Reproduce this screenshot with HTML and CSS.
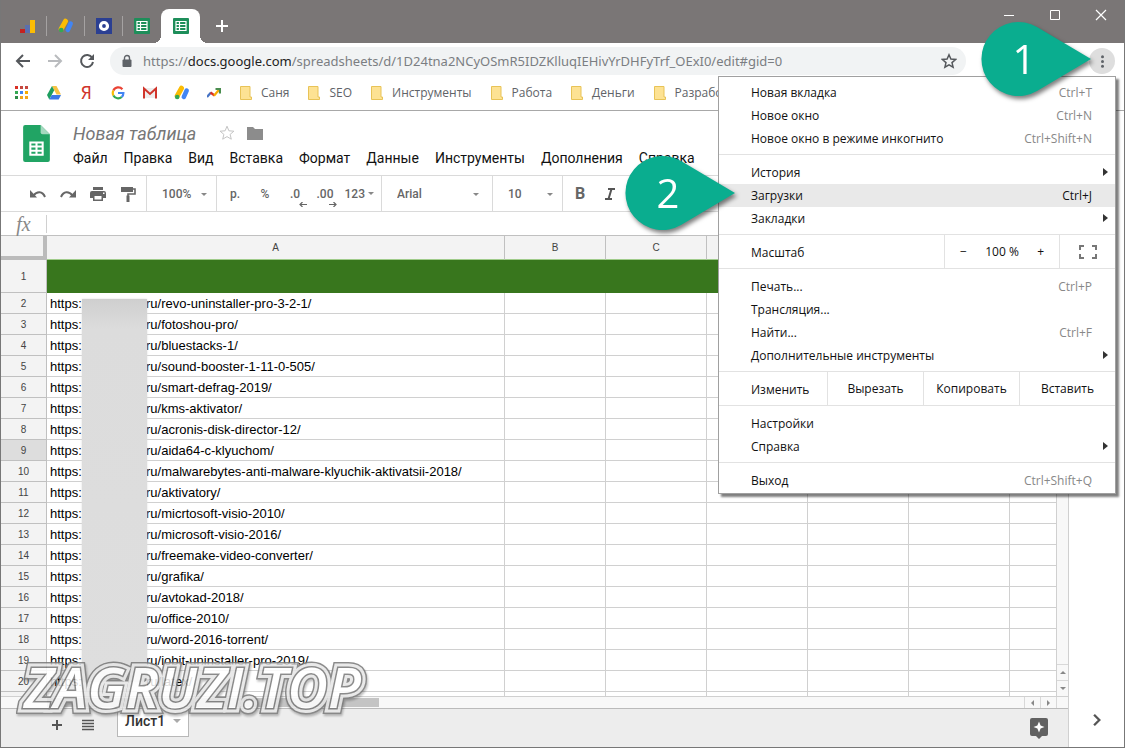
FILE: index.html
```html
<!DOCTYPE html>
<html lang="ru">
<head>
<meta charset="utf-8">
<title>Новая таблица</title>
<link rel="stylesheet" href="styles.css">
</head>
<body>
<svg class="defs" aria-hidden="true">
  <symbol id="sheet-fav" viewBox="0 0 16 16"><rect width="16" height="16" rx="1" fill="#1e8e5a"/><path d="M3 3.500h10v9H3zM3 6.500h10M3 9.500h10M6.500 3.500v9" fill="none" stroke="#fff" stroke-width="1.200"/></symbol>
  <symbol id="folder" viewBox="0 0 12 14"><path d="M.5.5h9.500v10.500h1.500v2.500H.5z" fill="#fde293" stroke="#e8c357"/></symbol>
  <symbol id="ads" viewBox="0 0 16 16"><path d="M7.500 3.200 3.200 11" stroke="#fbbc04" stroke-width="5" stroke-linecap="round"/><path d="M12.700 5.500 9.800 12" stroke="#4285f4" stroke-width="4.500" stroke-linecap="round"/><circle cx="3.200" cy="12" r="2.300" fill="#34a853"/></symbol>
</svg>
<div class="window">
  <header class="tabs">
    <div class="tab-list">
      <button class="tab" aria-label="Analytics"><svg viewBox="0 0 16 16"><path d="M0 11h5v4H0z" fill="#c5221f"/><path d="M5 7h5v8H5z" fill="#5b6fae"/><path d="M10 2h5v13h-5z" fill="#fbbc04"/></svg></button>
      <button class="tab" aria-label="AdSense"><svg><use href="#ads"/></svg></button>
      <button class="tab" aria-label="Сервис"><svg viewBox="0 0 16 16"><rect width="16" height="16" fill="#2b3f92"/><circle cx="8" cy="8" r="3.500" fill="none" stroke="#fff" stroke-width="3.200"/></svg></button>
      <button class="tab" aria-label="Таблица"><svg><use href="#sheet-fav"/></svg></button>
      <button class="tab active" aria-label="Новая таблица"><svg><use href="#sheet-fav"/></svg></button>
      <button class="new-tab" aria-label="Новая вкладка"><svg viewBox="0 0 14 14"><path d="M7 1v12M1 7h12" stroke="#fff" stroke-width="2"/></svg></button>
    </div>
    <div class="window-buttons">
      <button aria-label="Свернуть"><svg viewBox="0 0 12 12"><path d="M1 6.500h10" stroke="#fff"/></svg></button>
      <button aria-label="Развернуть"><svg viewBox="0 0 12 12"><path d="M1.500 1.500h9v9h-9z" fill="none" stroke="#fff"/></svg></button>
      <button aria-label="Закрыть"><svg viewBox="0 0 12 12"><path d="m1 1 10 10M11 1 1 11" stroke="#fff" stroke-width="1.200"/></svg></button>
    </div>
  </header>

  <div class="address-row">
    <button class="nav" aria-label="Назад"><svg viewBox="0 0 16 16"><path d="M15 8H2M8 2 2 8l6 6" fill="none" stroke="#55585c" stroke-width="2"/></svg></button>
    <button class="nav" aria-label="Вперёд"><svg viewBox="0 0 16 16"><path d="M1 8h13M8 2l6 6-6 6" fill="none" stroke="#b9bbbe" stroke-width="2"/></svg></button>
    <button class="nav" aria-label="Обновить"><svg viewBox="0 0 16 16"><path d="M13.200 4.800A6 6 0 1 0 14 9" fill="none" stroke="#55585c" stroke-width="2"/><path d="M15 1v6H9z" fill="#55585c"/></svg></button>
    <div class="omnibox">
      <svg class="lock" viewBox="0 0 10 14"><path d="M2.500 6V4a2.500 2.500 0 0 1 5 0v2" fill="none" stroke="#5f6368" stroke-width="1.400"/><rect x="0.500" y="5.500" width="9" height="7.500" rx="1" fill="#5f6368"/></svg>
      <div class="url" role="textbox" contenteditable="true" spellcheck="false" aria-label="Адрес">https://<b>docs.google.com</b>/spreadsheets/d/1D24tna2NCyOSmR5IDZKlluqIEHivYrDHFyTrf_OExI0/edit#gid=0</div>
      <button class="star" aria-label="В закладки"><svg viewBox="0 0 16 16"><path d="m8 1.800 1.900 4.300 4.700.4-3.600 3.100 1.100 4.600L8 11.800l-4.100 2.400L5 9.600 1.400 6.500l4.700-.4z" fill="none" stroke="#55585c" stroke-width="1.500"/></svg></button>
    </div>
    <button class="more" aria-label="Меню" aria-expanded="true"><svg viewBox="0 0 16 16"><circle cx="8" cy="3" r="1.600"/><circle cx="8" cy="8" r="1.600"/><circle cx="8" cy="13" r="1.600"/></svg></button>
  </div>

  <nav class="bookmarks" aria-label="Закладки">
    <a href="#" aria-label="Сервисы"><svg viewBox="0 0 14 14"><path d="M0 0h3v3H0z" fill="#d93025"/><path d="M5 0h3v3H5zM10 0h3v3h-3z" fill="#c5483f"/><path d="M0 5h3v3H0z" fill="#34a853"/><path d="M5 5h3v3H5z" fill="#4285f4"/><path d="M10 5h3v3h-3z" fill="#f9ab00"/><path d="M0 10h3v3H0z" fill="#2d8a47"/><path d="M5 10h3v3H5zM10 10h3v3h-3z" fill="#f2a51d"/></svg></a>
    <a href="#" aria-label="Диск"><svg viewBox="0 0 14 14"><path d="M5 0h4.500L14 8.500H9.500z" fill="#f6c343"/><path d="M5 0 0 9l2.300 4.500L7.200 4.200z" fill="#1e9e5f"/><path d="M4.700 8.900H14l-2.300 4.600H2.300z" fill="#3b78e7"/></svg></a>
    <a href="#" class="yandex" aria-label="Яндекс">Я</a>
    <a href="#" aria-label="Google"><svg viewBox="0 0 14 14" fill="none" stroke-width="2.200"><path d="M11.400 3.200A5.400 5.400 0 0 0 2.400 4.500" stroke="#ea4335"/><path d="M2.400 4.500a5.400 5.400 0 0 0 0 5" stroke="#fbbc04"/><path d="M2.400 9.500a5.400 5.400 0 0 0 8.300 1.500" stroke="#34a853"/><path d="M10.700 11a5.400 5.400 0 0 0 1.700-4H7" stroke="#4285f4"/></svg></a>
    <a href="#" aria-label="Gmail"><svg viewBox="0 0 14 14"><path d="M1 2h12v10H1z" fill="#eee"/><path d="M1 12.500V2.500L7 8l6-5.500v10" fill="none" stroke="#d0352b" stroke-width="2"/></svg></a>
    <a href="#" aria-label="AdSense"><svg class="wide"><use href="#ads"/></svg></a>
    <a href="#" aria-label="Статистика"><svg viewBox="0 0 14 14" fill="none" stroke-width="2.200"><path d="m0 11 4-4.500" stroke="#4472c4"/><path d="m3.500 6.500 4 3" stroke="#d93025"/><path d="m7 9.800 5-6" stroke="#f9ab00"/><path d="M8.500 3h4.500v4.500" stroke="#4a8d4f"/></svg></a>
    <a href="#"><svg class="folder"><use href="#folder"/></svg>Саня</a>
    <a href="#"><svg class="folder"><use href="#folder"/></svg>SEO</a>
    <a href="#"><svg class="folder"><use href="#folder"/></svg>Инструменты</a>
    <a href="#"><svg class="folder"><use href="#folder"/></svg>Работа</a>
    <a href="#"><svg class="folder"><use href="#folder"/></svg>Деньги</a>
    <a href="#"><svg class="folder"><use href="#folder"/></svg>Разработка</a>
  </nav>

  <div class="content">
    <main class="editor">
      <div class="doc-header">
        <svg class="logo" viewBox="0 0 26 36"><path d="M2 0h15l9 9v25a2 2 0 0 1-2 2H2a2 2 0 0 1-2-2V2a2 2 0 0 1 2-2z" fill="#21a464"/><path d="M17 0v7a2 2 0 0 0 2 2h7z" fill="#a4d9bf"/><path d="M7 17h12v12H7zM7 21h12M7 25h12M13 17v12" fill="none" stroke="#fff" stroke-width="2"/></svg>
        <div class="doc-meta">
          <div class="title-row">
            <input class="title" value="Новая таблица" aria-label="Название">
            <button aria-label="Пометить"><svg viewBox="0 0 16 16"><path d="m8 1.200 1.900 4.600 5 .4-3.800 3.200 1.200 4.800L8 11.600l-4.300 2.600 1.200-4.800L1.100 6.200l5-.4z" fill="none" stroke="#c4c4c4"/></svg></button>
            <button aria-label="Переместить"><svg viewBox="0 0 16 16"><path d="M0 2h6l2 2h8v11H0z" fill="#8c8c8c"/></svg></button>
          </div>
          <nav class="doc-menu" aria-label="Меню документа">
            <button>Файл</button><button>Правка</button><button>Вид</button><button>Вставка</button><button>Формат</button><button>Данные</button><button>Инструменты</button><button>Дополнения</button><button>Справка</button>
          </nav>
        </div>
      </div>

      <div class="toolbar">
        <div class="group icons">
          <button aria-label="Отменить"><svg viewBox="0 0 18 18"><path d="M4.500 10.500C8 6 13.500 6 16 12" fill="none" stroke="#666" stroke-width="2"/><path d="M1 5v7.500h7z" fill="#666"/></svg></button>
          <button aria-label="Повторить"><svg viewBox="0 0 18 18"><path d="M13.500 10.500C10 6 4.500 6 2 12" fill="none" stroke="#666" stroke-width="2"/><path d="M17 5v7.500h-7z" fill="#666"/></svg></button>
          <button aria-label="Печать"><svg viewBox="0 0 18 18" fill="#666"><path d="M4 2h10v3H4z"/><path fill-rule="evenodd" d="M3 6h12a2 2 0 0 1 2 2v5h-3v3H4v-3H1V8a2 2 0 0 1 2-2zm2.500 5v3.500h7V11zM14 7.500V9h1.500V7.500z"/></svg></button>
          <button aria-label="Формат"><svg viewBox="0 0 18 18"><path d="M2 2h12v5H2z" fill="#666"/><path d="M14 4h2v5H9v2" fill="none" stroke="#666" stroke-width="1.600"/><path d="M7.500 10.500h3V17h-3z" fill="#666"/></svg></button>
        </div>
        <div class="group zoom"><select aria-label="Масштаб"><option>100%</option></select></div>
        <div class="group formats">
          <button>р.</button><button>%</button>
          <button class="decimal">.0<svg viewBox="0 0 8 5"><path d="M8 2.500H1M3.500 0 1 2.500 3.500 5" fill="none" stroke="#666" stroke-width="1.200"/></svg></button>
          <button class="decimal">.00<svg viewBox="0 0 8 5"><path d="M0 2.500h7M4.500 0 7 2.500 4.500 5" fill="none" stroke="#666" stroke-width="1.200"/></svg></button>
          <button class="number-format">123<i class="caret"></i></button>
        </div>
        <div class="group font"><select aria-label="Шрифт"><option>Arial</option></select></div>
        <div class="group size"><select aria-label="Размер"><option>10</option></select></div>
        <div class="group style"><button class="bold" aria-label="Полужирный">B</button><button aria-label="Курсив"><svg viewBox="0 0 14 14"><path d="M5 2h7M2 12h7M8.500 2l-3 10" stroke="#555" stroke-width="2"/></svg></button></div>
      </div>

      <div class="formula">
        <label for="fx">fx</label>
        <input id="fx" type="text">
      </div>

      <div class="grid-area">
        <div class="grid">
          <table>
            <colgroup><col class="c-num"><col class="c-a"><col class="c"><col class="c"><col class="c"><col class="c"><col class="c"><col></colgroup>
            <thead><tr><th class="corner"><th>A<th>B<th>C<th>D<th>E<th>F<th>G</thead>
            <tbody>
            <tr class="green"><th>1<td><td><td><td><td><td><td>
            <tr><th>2<td><span class="scheme">https:</span>ru/revo-uninstaller-pro-3-2-1/<td><td><td><td><td><td>
            <tr><th>3<td><span class="scheme">https:</span>ru/fotoshou-pro/<td><td><td><td><td><td>
            <tr><th>4<td><span class="scheme">https:</span>ru/bluestacks-1/<td><td><td><td><td><td>
            <tr><th>5<td><span class="scheme">https:</span>ru/sound-booster-1-11-0-505/<td><td><td><td><td><td>
            <tr><th>6<td><span class="scheme">https:</span>ru/smart-defrag-2019/<td><td><td><td><td><td>
            <tr><th>7<td><span class="scheme">https:</span>ru/kms-aktivator/<td><td><td><td><td><td>
            <tr><th>8<td><span class="scheme">https:</span>ru/acronis-disk-director-12/<td><td><td><td><td><td>
            <tr class="current"><th>9<td><span class="scheme">https:</span>ru/aida64-c-klyuchom/<td><td><td><td><td><td>
            <tr><th>10<td><span class="scheme">https:</span>ru/malwarebytes-anti-malware-klyuchik-aktivatsii-2018/<td><td><td><td><td><td>
            <tr><th>11<td><span class="scheme">https:</span>ru/aktivatory/<td><td><td><td><td><td>
            <tr><th>12<td><span class="scheme">https:</span>ru/micrtosoft-visio-2010/<td><td><td><td><td><td>
            <tr><th>13<td><span class="scheme">https:</span>ru/microsoft-visio-2016/<td><td><td><td><td><td>
            <tr><th>14<td><span class="scheme">https:</span>ru/freemake-video-converter/<td><td><td><td><td><td>
            <tr><th>15<td><span class="scheme">https:</span>ru/grafika/<td><td><td><td><td><td>
            <tr><th>16<td><span class="scheme">https:</span>ru/avtokad-2018/<td><td><td><td><td><td>
            <tr><th>17<td><span class="scheme">https:</span>ru/office-2010/<td><td><td><td><td><td>
            <tr><th>18<td><span class="scheme">https:</span>ru/word-2016-torrent/<td><td><td><td><td><td>
            <tr><th>19<td><span class="scheme">https:</span>ru/iobit-uninstaller-pro-2019/<td><td><td><td><td><td>
            <tr><th>20<td><span class="scheme">https:</span>ru/latex/<td><td><td><td><td><td>
            <tr><th><td><td><td><td><td><td><td>
            </tbody>
          </table>
          <div class="smudge"></div>
        </div>
        <div class="v-scroll">
          <button aria-label="Вверх"><i class="arrow up"></i></button>
          <button aria-label="Вниз"><i class="arrow down"></i></button>
        </div>
      </div>
      <div class="h-scroll">
        <div class="track"><div class="thumb"></div></div>
        <button aria-label="Влево"><i class="arrow left"></i></button>
        <button aria-label="Вправо"><i class="arrow right"></i></button>
        <div class="scroll-corner"></div>
      </div>
      <footer class="sheet-bar">
        <button aria-label="Добавить лист"><svg viewBox="0 0 12 12"><path d="M6 1v10M1 6h10" stroke="#555" stroke-width="2"/></svg></button>
        <button aria-label="Все листы"><svg viewBox="0 0 12 12"><path d="M0 1.500h12M0 4.500h12M0 7.500h12M0 10.500h12" stroke="#555" stroke-width="1.600"/></svg></button>
        <button class="sheet-tab">Лист1<i class="caret"></i></button>
        <button class="explore" aria-label="Анализ данных"><svg viewBox="0 0 18 21"><path d="M2 0h14a2 2 0 0 1 2 2v14a2 2 0 0 1-2 2h-4l-3 3-3-3H2a2 2 0 0 1-2-2V2a2 2 0 0 1 2-2z" fill="#616161"/><path d="m9 3.500 1.600 3.900L14.500 9l-3.900 1.600L9 14.500l-1.600-3.900L3.500 9l3.900-1.600z" fill="#fff"/></svg></button>
      </footer>
    </main>
    <aside class="side">
      <button aria-label="Показать панель"><svg viewBox="0 0 12 12"><path d="m3.500 1.500 4.500 4.500-4.500 4.500" fill="none" stroke="#555" stroke-width="2"/></svg></button>
    </aside>
  </div>
</div>

<div class="chrome-menu" role="menu">
  <div class="section">
    <button role="menuitem">Новая вкладка<kbd>Ctrl+T</kbd></button>
    <button role="menuitem">Новое окно<kbd>Ctrl+N</kbd></button>
    <button role="menuitem">Новое окно в режиме инкогнито<kbd>Ctrl+Shift+N</kbd></button>
  </div>
  <div class="section">
    <button role="menuitem" class="sub">История</button>
    <button role="menuitem" class="hover">Загрузки<kbd>Ctrl+J</kbd></button>
    <button role="menuitem" class="sub">Закладки</button>
  </div>
  <div class="row zoom-row">
    <span class="row-label">Масштаб</span>
    <div class="zoom-controls"><button>−</button><span>100 %</span><button>+</button></div>
    <button class="full" aria-label="Во весь экран"><svg viewBox="0 0 18 14"><path d="M1 5V1h4M13 1h4v4M17 9v4h-4M5 13H1V9" fill="none" stroke="#777" stroke-width="2"/></svg></button>
  </div>
  <div class="section">
    <button role="menuitem">Печать...<kbd>Ctrl+P</kbd></button>
    <button role="menuitem">Трансляция...</button>
    <button role="menuitem">Найти...<kbd>Ctrl+F</kbd></button>
    <button role="menuitem" class="sub">Дополнительные инструменты</button>
  </div>
  <div class="row edit-row">
    <span class="row-label">Изменить</span>
    <button>Вырезать</button><button>Копировать</button><button>Вставить</button>
  </div>
  <div class="section">
    <button role="menuitem">Настройки</button>
    <button role="menuitem" class="sub">Справка</button>
  </div>
  <div class="section last">
    <button role="menuitem">Выход<kbd>Ctrl+Shift+Q</kbd></button>
  </div>
</div>

<div class="pin pin-one"><svg viewBox="0 0 112 76"><path d="M111 38 57 70A37 37 0 1 1 57 6z"/></svg><span>1</span></div>
<div class="pin pin-two"><svg viewBox="0 0 112 76"><path d="M111 38 57 70A37 37 0 1 1 57 6z"/></svg><span>2</span></div>
<div class="watermark" data-text="ZAGRUZI.TOP">ZAGRUZI.TOP</div>
</body>
</html>
```
FILE: styles.css
```css
* { box-sizing: border-box; }
html, body { height: 100%; }
body { margin: 0; position: relative; overflow: hidden; font-family: "Open Sans", "Noto Sans", sans-serif; font-size: 12px; color: #222; background: #fff; }
button, input, select { font: inherit; color: inherit; border: 0; background: none; padding: 0; margin: 0; outline: 0; }
select { appearance: none; }
svg { display: block; }
.defs { display: none; }

.window { height: 100%; display: flex; flex-direction: column; border: solid #777; border-width: 0 1px 1px; }

.tabs { flex: none; height: 43px; background: #7a7676; display: flex; justify-content: space-between; }
.tab-list { display: flex; align-items: flex-end; padding-left: 8px; }
.tab { width: 38px; height: 34px; display: grid; place-items: center; position: relative; }
.tab svg { width: 16px; height: 16px; }
.tab:nth-child(-n+3)::after { content: ""; position: absolute; right: 0; top: 7px; height: 20px; border-right: 1px solid #a5a2a2; }
.tab.active { width: 39px; background: #fff; border-radius: 8px 8px 0 0; }
.tab.active::before, .tab.active::after { content: ""; position: absolute; bottom: 0; width: 8px; height: 8px; }
.tab.active::before { right: 100%; background: radial-gradient(circle at 0 0, transparent 8px, #fff 8px); }
.tab.active::after { left: 100%; background: radial-gradient(circle at 100% 0, transparent 8px, #fff 8px); }
.new-tab { width: 44px; height: 34px; display: grid; place-items: center; }
.new-tab svg { width: 14px; height: 14px; }
.window-buttons { display: flex; height: 30px; }
.window-buttons button { width: 46px; display: grid; place-items: center; }
.window-buttons svg { width: 12px; height: 12px; }

.address-row { flex: none; height: 36px; display: flex; align-items: center; padding: 0 9px 0 6px; background: #fff; }
.nav { width: 32px; height: 28px; display: grid; place-items: center; }
.nav svg { width: 16px; height: 16px; }
.omnibox { flex: 1; height: 28px; display: flex; align-items: center; margin: 0 123px 0 7px; padding: 0 9px 0 12px; border-radius: 14px; background: #f1f3f4; }
.lock { width: 10px; height: 14px; }
.url { flex: 1; margin-left: 11px; font: 13px/20px "Noto Sans", "Open Sans", sans-serif; color: #7b7e82; white-space: nowrap; outline: 0; }
.url b { font-weight: 400; color: #222; }
.star svg { width: 16px; height: 16px; }
.more { width: 26px; height: 26px; border-radius: 50%; background: #dedede; display: grid; place-items: center; }
.more svg { width: 15px; height: 15px; fill: #5f6368; }

.bookmarks { flex: none; height: 32px; display: flex; align-items: center; gap: 18px; padding: 0 14px 4px; border-bottom: 1px solid #a8a8a8; overflow: hidden; }
.bookmarks a { display: flex; align-items: center; gap: 9px; color: #606368; text-decoration: none; line-height: 18px; white-space: nowrap; }
.bookmarks svg { width: 14px; height: 14px; }
.bookmarks svg.wide { width: 16px; height: 16px; margin: 0 -1px; }
.bookmarks svg.folder { width: 12px; margin-left: 1px; }
.bookmarks .yandex { width: 14px; justify-content: center; color: #d0352b; font: 18px/18px "DejaVu Sans Condensed", sans-serif; }

.content { flex: 1; min-height: 0; display: flex; }
.editor { flex: 1; min-width: 0; display: flex; flex-direction: column; border-right: 1px solid #d0d0d0; }
.side { width: 55px; display: flex; align-items: flex-end; justify-content: center; padding-bottom: 20px; }
.side svg { width: 14px; height: 14px; }

.doc-header { flex: none; height: 65px; display: flex; padding: 14px 22px 0; gap: 23px; border-bottom: 1px solid #dadada; }
.logo { width: 27px; height: 37px; }
.doc-meta { display: flex; flex-direction: column; margin-top: -4px; font-family: Roboto, sans-serif; }
.title-row { display: flex; align-items: center; gap: 12px; height: 24px; }
.title { width: 134px; font-size: 18px; font-style: italic; color: #777; }
.title-row svg { width: 16px; height: 16px; }
.doc-menu { display: flex; gap: 16px; font-size: 14px; line-height: 26px; color: #111; }

.toolbar { flex: none; height: 36px; display: flex; border-bottom: 1px solid #dadada; font: 500 12px/16px Roboto, sans-serif; color: #666; }
.group { display: flex; align-items: center; border-right: 1px solid #dadada; }
.icons { width: 146px; padding-left: 28px; gap: 12px; }
.icons svg { width: 18px; height: 18px; }
.zoom, .font, .size { position: relative; }
.zoom select, .font select, .size select { width: 100%; height: 28px; padding-left: 15px; }
.zoom::after, .font::after, .size::after, .caret { content: ""; border: solid transparent; border-width: 3px 3px 0; border-top-color: #888; }
.zoom::after, .font::after, .size::after { position: absolute; right: 9px; top: 17px; }
.zoom { width: 70px; }
.formats { width: 165px; padding-left: 3px; }
.formats button { height: 28px; width: 30px; text-align: center; }
.formats .number-format { width: 34px; display: flex; align-items: center; gap: 3px; justify-content: flex-end; }
.decimal { position: relative; }
.decimal svg { position: absolute; right: 3px; bottom: 1px; width: 8px; height: 5px; }
.font { width: 111px; }
.font::after { right: 13px; }
.size { width: 70px; }
.style { border: 0; padding-left: 12px; gap: 18px; }
.bold { font-size: 16px; font-weight: 700; }
.style svg { width: 14px; height: 14px; }

.formula { flex: none; height: 24px; display: flex; align-items: center; border-bottom: 1px solid #c0c0c0; }
.formula label { width: 45px; text-align: center; font: italic 20px/20px "Liberation Serif", serif; color: #888; }
.formula input { flex: 1; height: 18px; border-left: 1px solid #d0d0d0; }

.grid-area { flex: 1; min-height: 0; display: flex; }
.grid { flex: 1; min-width: 0; overflow: hidden; position: relative; }
table { table-layout: fixed; width: 100%; border-collapse: separate; border-spacing: 0; font-family: "Liberation Sans", Arial, sans-serif; }
.c-num { width: 46px; }
.c-a { width: 458px; }
.c { width: 101px; }
th, td { height: 21px; padding: 0; border: solid #d0d0d0; border-width: 0 1px 1px 0; }
th { font-size: 10px; font-weight: 400; color: #444; background: #f3f3f3; border-color: #c0c0c0; }
thead th { height: 24px; border-bottom-color: #9fcb8a; }
th:last-child, td:last-child { border-right: 0; }
.corner { border: solid #bbb; border-width: 0 4px 4px 0; }
td { padding: 1px 3px 0; font-size: 13px; line-height: 16px; color: #000; white-space: nowrap; }
.green th { height: 33px; }
.green td { background: #38761d; border-color: #38761d; }
.current th { background: #ddd; }
.scheme { display: inline-block; width: 96px; }
.smudge { position: absolute; left: 81px; top: 63px; bottom: 14px; width: 65px; background: linear-gradient(#cfcfcf, #dcdcdc 30px, #dedede); box-shadow: 0 0 2px #dedede; }

.arrow { display: block; margin: auto; width: 0; height: 0; border: 3px solid transparent; }
.up { border-bottom-color: #888; border-top: 0; }
.down { border-top-color: #888; border-bottom: 0; }
.left { border-right-color: #888; border-left: 0; }
.right { border-left-color: #888; border-right: 0; }
.v-scroll { width: 12px; display: flex; flex-direction: column; justify-content: flex-end; background: #f8f8f8; border-left: 1px solid #d0d0d0; }
.v-scroll button { height: 16px; border-top: 1px solid #d8d8d8; }
.h-scroll { flex: none; height: 13px; display: flex; background: #f8f8f8; border: solid #bbb; border-width: 1px 0; border-top-color: #d0d0d0; }
.track { flex: 1; padding: 1px 0 1px 46px; }
.thumb { width: 34%; height: 100%; background: #c4c4c4; }
.h-scroll button { width: 16px; border-left: 1px solid #d8d8d8; }
.scroll-corner { width: 12px; border-left: 1px solid #d8d8d8; }

.sheet-bar { flex: none; height: 38px; display: flex; align-items: flex-start; padding: 0 20px 0 50px; background: #ededed; gap: 19px; }
.sheet-bar > button { height: 32px; }
.sheet-bar svg { width: 12px; height: 12px; }
.sheet-bar .sheet-tab { height: 28px; margin-left: 4px; padding: 0 7px 3px; display: flex; align-items: center; gap: 8px; background: #fff; border: 1px solid #b8b8b8; border-top: 0; font: 500 14px/20px Roboto, sans-serif; color: #333; }
.sheet-tab .caret { border-width: 4px 4px 0; border-top-color: #aaa; }
.sheet-bar .explore { margin: 3px 0 0 auto; }
.sheet-bar .explore svg { width: 18px; height: 21px; }

.chrome-menu { position: absolute; right: 9px; top: 76px; width: 398px; background: #fff; border: 1px solid #a0a0a0; box-shadow: 3px 3px 2px rgba(0, 0, 0, .5); color: #111; line-height: 18px; }
.section { padding: 6px 0 4px; border-bottom: 1px solid #e2e2e2; }
.section:first-child { padding-top: 4px; }
.section.last { padding-bottom: 1px; border: 0; }
.section button { width: 100%; height: 23px; display: flex; align-items: center; justify-content: space-between; padding: 0 23px 0 32px; position: relative; }
.section .hover { background: #e9e9e9; }
kbd { font: inherit; color: #888; }
.hover kbd { color: #111; }
.sub::after { content: ""; position: absolute; right: 7px; top: 7px; border: solid transparent; border-width: 4px 0 4px 5px; border-left-color: #333; }
.row { display: flex; height: 34px; border-bottom: 1px solid #e2e2e2; }
.row-label { padding: 2px 0 0 32px; align-self: center; }
.zoom-row .row-label { flex: 1; }
.zoom-controls { width: 115px; display: flex; align-items: center; justify-content: space-between; padding: 0 15px; border-left: 1px solid #e2e2e2; }
.full { width: 56px; display: grid; place-items: center; border-left: 1px solid #e2e2e2; }
.full svg { width: 18px; height: 14px; }
.edit-row .row-label { width: 108px; }
.edit-row button { flex: 1; border-left: 1px solid #e2e2e2; }

.pin { position: absolute; width: 112px; height: 76px; filter: drop-shadow(2px 3px 2px rgba(0, 0, 0, .5)); }
.pin svg { position: absolute; width: 112px; height: 76px; fill: #0aad8f; }
.pin span { position: absolute; left: 0; top: 0; width: 88px; text-align: center; font-size: 40px; line-height: 76px; color: #fff; }
.pin-one { right: 33px; top: 21px; }
.pin-two { right: 389px; top: 155px; }

.watermark { position: absolute; left: 24px; bottom: 24px; font: italic 600 56px/76px "Open Sans", sans-serif; color: #777; -webkit-text-stroke: 12px #777; paint-order: stroke; stroke-linejoin: round; opacity: .85; filter: drop-shadow(1px 2px 1px rgba(0, 0, 0, .3)); pointer-events: none; }
.watermark::before, .watermark::after { content: attr(data-text); position: absolute; left: 0; top: 0; }
.watermark::before { color: #e6e6e6; -webkit-text-stroke: 9px #e6e6e6; }
.watermark::after { color: #fff; -webkit-text-stroke: 3px #777; }
```
